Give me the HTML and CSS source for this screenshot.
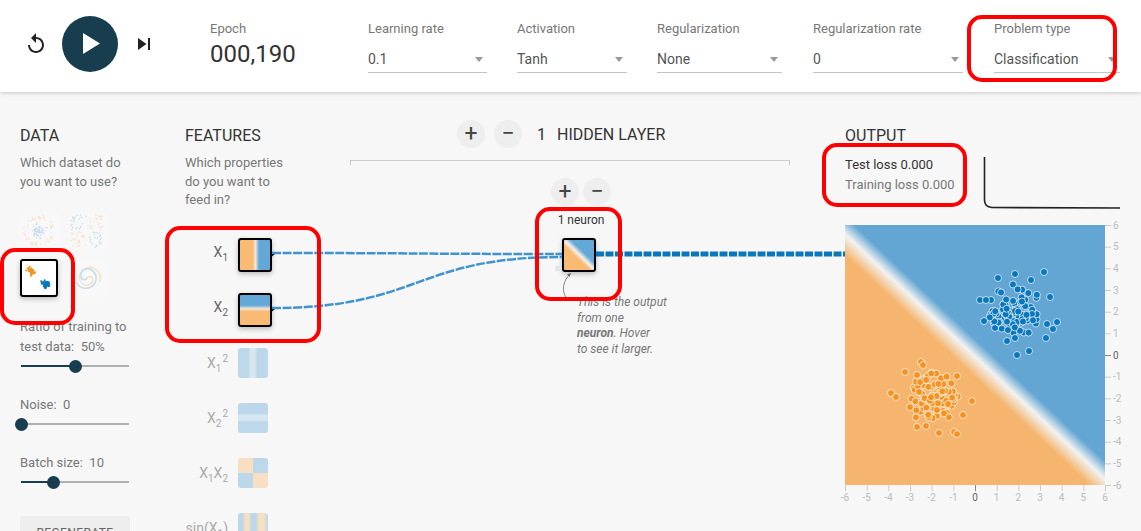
FILE: index.html
```html
<!DOCTYPE html>
<html lang="en">
<head>
  <meta charset="UTF-8">
  <title>Neural Network Playground</title>
  <link rel="stylesheet" href="styles.css">
</head>
<body>
<div class="page">
  <header class="top-bar">
    <div class="player">
      <svg class="icon" viewBox="0 0 24 24"><path d="M12 5V1L7 6l5 5V7c3.31 0 6 2.69 6 6s-2.69 6-6 6-6-2.69-6-6H4c0 4.42 3.58 8 8 8s8-3.58 8-8-3.58-8-8-8z"/></svg>
      <div class="play-btn"><svg viewBox="0 0 56 56"><path d="M21 17v21l17-10.5z"/></svg></div>
      <svg class="icon" viewBox="0 0 24 24"><path d="M6 18l8.5-6L6 6v12zM16 6v12h2V6h-2z"/></svg>
    </div>
    <div class="field epoch">
      <span class="field-label">Epoch</span>
      <span class="epoch-value">000,190</span>
    </div>
    <div class="field w-lr">
      <span class="field-label">Learning rate</span>
      <div class="select">0.1</div>
    </div>
    <div class="field w-act">
      <span class="field-label">Activation</span>
      <div class="select">Tanh</div>
    </div>
    <div class="field w-reg">
      <span class="field-label">Regularization</span>
      <div class="select">None</div>
    </div>
    <div class="field w-rate">
      <span class="field-label">Regularization rate</span>
      <div class="select">0</div>
    </div>
    <div class="field w-prob">
      <span class="field-label">Problem type</span>
      <div class="select">Classification</div>
    </div>
  </header>

  <main class="main">
    <section class="col-data">
      <h4>DATA</h4>
      <p class="hint">Which dataset do<br>you want to use?</p>
      <div class="datasets">
        <svg class="dataset" id="dsCircle" viewBox="0 0 38 38"></svg>
        <svg class="dataset" id="dsXor" viewBox="0 0 38 38"></svg>
        <svg class="dataset active" id="dsGauss" viewBox="0 0 34 34"></svg>
        <svg class="dataset" id="dsSpiral" viewBox="0 0 38 38">
          <path d="M19 19c2-3 6-1 6 2s-4 6-8 5-7-6-5-11 8-8 13-6 9 8 7 14" fill="none" stroke="#f59322" stroke-width="1.6"/>
          <path d="M19 19c-2 3-5 2-6-1s1-7 5-8 9 2 10 7-2 11-8 12-10-2-12-6" fill="none" stroke="#0877bd" stroke-width="1.6"/>
        </svg>
      </div>
      <div class="slider-label first">Ratio of training to<br>test data:  50%</div>
      <div class="slider"><div class="slider-fill" style="width: 50%"></div><div class="slider-thumb" style="left: 50%"></div></div>
      <div class="slider-label">Noise:  0</div>
      <div class="slider"><div class="slider-fill" style="width: 0%"></div><div class="slider-thumb" style="left: 0%"></div></div>
      <div class="slider-label">Batch size:  10</div>
      <div class="slider"><div class="slider-fill" style="width: 30%"></div><div class="slider-thumb" style="left: 30%"></div></div>
      <button class="regen">REGENERATE</button>
    </section>

    <section class="col-features">
      <h4>FEATURES</h4>
      <p class="hint">Which properties<br>do you want to<br>feed in?</p>
      <div class="feature-list">
        <div class="feature on">
          <span class="feature-name">X<sub>1</sub></span>
          <div class="thumb thumb-x1"></div>
        </div>
        <div class="feature on">
          <span class="feature-name">X<sub>2</sub></span>
          <div class="thumb thumb-x2"></div>
        </div>
        <div class="feature">
          <span class="feature-name">X<sub>1</sub><sup>2</sup></span>
          <div class="thumb thumb-x1sq"></div>
        </div>
        <div class="feature">
          <span class="feature-name">X<sub>2</sub><sup>2</sup></span>
          <div class="thumb thumb-x2sq"></div>
        </div>
        <div class="feature">
          <span class="feature-name">X<sub>1</sub>X<sub>2</sub></span>
          <div class="thumb thumb-x1x2"></div>
        </div>
        <div class="feature">
          <span class="feature-name">sin(X<sub>1</sub>)</span>
          <div class="thumb thumb-sin"></div>
        </div>
      </div>
    </section>

    <section class="col-network">
      <div class="layer-head">
        <div class="round-btn">+</div>
        <div class="round-btn">&minus;</div>
        <span class="layer-count">1</span>
        <span class="layer-title">HIDDEN LAYER</span>
      </div>
      <div class="layer-rule"></div>
      <div class="neuron-btns">
        <div class="round-btn">+</div>
        <div class="round-btn">&minus;</div>
      </div>
      <div class="neuron-count">1 neuron</div>
      <div class="thumb thumb-neuron"></div>
      <p class="callout">This is the output<br>from one<br><b>neuron</b>. Hover<br>to see it larger.</p>
    </section>

    <section class="col-output">
      <h4>OUTPUT</h4>
      <div class="loss-row">
        <div class="losses">
          <div class="loss-test">Test loss 0.000</div>
          <div class="loss-train">Training loss 0.000</div>
        </div>
        <svg class="loss-chart" viewBox="0 0 137 54"><path d="M1.5 1V44Q1.5 51 9 51.500L137 52" fill="none" stroke="#222" stroke-width="1.6"/></svg>
      </div>
      <svg class="plot" id="plot" width="260" height="260" viewBox="0 0 260 260">
        <defs>
          <linearGradient id="heat" gradientUnits="userSpaceOnUse" x1="114.700" y1="138" x2="134" y2="117.500">
            <stop offset="0" stop-color="#f5b56e"/>
            <stop offset="0.54" stop-color="#f2f2f2"/>
            <stop offset="1" stop-color="#64a6d3"/>
          </linearGradient>
        </defs>
        <rect width="260" height="260" fill="url(#heat)"/>
      </svg>
    </section>
  </main>

  <svg class="links" viewBox="0 0 1141 531">
    <g fill="none" stroke="#3f94cf" stroke-width="2.500" stroke-dasharray="9 1.500">
      <path d="M272 253C420 253 420 254 562 254"/>
      <path d="M272 308C420 308 415 257 562 257"/>
    </g>
    <path d="M596 254H845" fill="none" stroke="#0877bd" stroke-width="5" stroke-dasharray="8 1.500"/>
    <rect x="555" y="266" width="5" height="5" fill="#dce6ee"/>
    <path d="M567 299C561 291 563 281 570 274" fill="none" stroke="#888" stroke-width="1"/>
    <path d="M571 273l-4 1.500 2.500 2.500z" fill="#666"/>
  </svg>

  <div class="mark mark-problem"></div>
  <div class="mark mark-loss"></div>
  <div class="mark mark-neuron"></div>
  <div class="mark mark-features"></div>
  <div class="mark mark-dataset"></div>
</div>
<script src="script.js"></script>
</body>
</html>
```
FILE: styles.css
```css
* {
  box-sizing: border-box;
}
html, body {
  margin: 0;
  height: 531px;
  overflow: hidden;
}
body {
  font-family: Roboto, "Helvetica Neue", Arial, sans-serif;
  background: #f7f7f7;
  color: #777;
  font-size: 13px;
}
.page {
  position: relative;
  height: 531px;
  overflow: hidden;
}

/* top bar */
.top-bar {
  display: flex;
  height: 92px;
  background: #fff;
  box-shadow: 0 1px 4px rgba(0, 0, 0, 0.2);
}
.player {
  display: flex;
  align-items: center;
  width: 210px;
  padding: 0 0 4px 24px;
}
.icon {
  width: 24px;
  height: 24px;
  fill: #222;
}
.play-btn {
  width: 56px;
  height: 56px;
  margin: 0 14px;
  border-radius: 50%;
  background: #183d4e;
}
.play-btn svg {
  display: block;
  fill: #fff;
}
.field {
  padding-top: 20px;
}
.field-label {
  display: block;
  font-size: 13px;
  line-height: 17px;
  color: #777;
}
.epoch { width: 158px; }
.epoch-value {
  display: block;
  margin-top: 2px;
  font-size: 24px;
  line-height: 30px;
  color: #333;
}
.w-lr { width: 149px; }
.w-lr .select { width: 119px; }
.w-act { width: 140px; }
.w-act .select { width: 110px; }
.w-reg { width: 156px; }
.w-reg .select { width: 125px; }
.w-rate { width: 181px; }
.w-rate .select { width: 150px; }
.w-prob { width: 126px; }
.select {
  position: relative;
  height: 28px;
  margin-top: 8px;
  border-bottom: 1px solid #c4c4c4;
  font-size: 14px;
  line-height: 28px;
  color: #555;
}
.select::after {
  content: "";
  position: absolute;
  right: 4px;
  top: 12px;
  border-left: 4px solid transparent;
  border-right: 4px solid transparent;
  border-top: 5px solid #999;
}

/* columns */
.main {
  display: flex;
  padding: 33px 0 0 20px;
}
h4 {
  margin: 0;
  padding-top: 1px;
  font-size: 16px;
  font-weight: 400;
  line-height: 20px;
  color: #333;
}
.hint {
  margin: 8px 0 0;
  font-size: 13px;
  line-height: 18.500px;
  color: #777;
}
.col-data { width: 165px; }
.col-features { width: 165px; }
.col-network { width: 495px; }
.col-output { width: 296px; }

/* data column */
.datasets {
  display: grid;
  grid-template-columns: 38px 38px;
  gap: 9px 10px;
  margin-top: 21px;
}
.dataset {
  display: block;
  width: 38px;
  height: 38px;
  background: #fff;
  border-radius: 3px;
  opacity: 0.2;
}
.dataset.active {
  opacity: 1;
  border: 2px solid #000;
  box-shadow: 0 2px 5px rgba(0, 0, 0, 0.25);
}
.slider-label {
  margin-top: 28px;
  line-height: 20px;
  white-space: pre;
  color: #777;
}
.slider-label.first {
  margin-top: 20px;
}
.slider {
  position: relative;
  width: 108px;
  height: 2px;
  margin: 8px 0 0 1px;
  background: #b0b0b0;
}
.slider-fill {
  height: 2px;
  background: #183d4e;
}
.slider-thumb {
  position: absolute;
  top: -5.500px;
  width: 13px;
  height: 13px;
  margin-left: -6.500px;
  border-radius: 50%;
  background: #183d4e;
}
.regen {
  display: block;
  width: 110px;
  height: 34px;
  margin-top: 33px;
  border: 0;
  border-radius: 3px;
  background: #eee;
  font-family: inherit;
  font-size: 12px;
  letter-spacing: 0.4px;
  color: #666;
}

/* features column */
.feature-list {
  margin-top: 28.500px;
}
.feature {
  display: flex;
  height: 55px;
}
.feature-name {
  width: 43px;
  height: 30px;
  margin-right: 10px;
  font-size: 14px;
  line-height: 30px;
  text-align: right;
  white-space: nowrap;
  color: #aaa;
}
.feature.on .feature-name {
  height: 34px;
  line-height: 28px;
  color: #666;
}
.feature-name sub, .feature-name sup {
  font-size: 10px;
  line-height: 0;
}
.feature-name sup {
  margin-left: 1px;
}
.thumb {
  width: 30px;
  height: 30px;
  border-radius: 3px;
  opacity: 0.4;
}
.feature.on .thumb, .thumb-neuron {
  width: 34px;
  height: 34px;
  border: 2px solid #000;
  opacity: 1;
  box-shadow: 0 2px 5px rgba(0, 0, 0, 0.25);
}
.feature.on .thumb::after, .thumb-neuron::after {
  content: "";
  position: absolute;
  margin: 10px 0 0 30px;
  border-top: 4px solid transparent;
  border-bottom: 4px solid transparent;
  border-left: 5px solid #000;
}
.thumb-x1 {
  background: linear-gradient(to right, #f9bb73 42%, #f3e8da 52%, #64a8d7 63%);
}
.thumb-x2 {
  background: linear-gradient(to bottom, #64a8d7 34%, #f3e8da 46%, #f9bb73 54%);
}
.thumb-x1sq {
  background: linear-gradient(to right, #64a8d7 34%, #a8cde4 42% 56%, #64a8d7 64%);
}
.thumb-x2sq {
  background: linear-gradient(to bottom, #64a8d7 34%, #a8cde4 42% 56%, #64a8d7 64%);
}
.thumb-x1x2 {
  background: conic-gradient(#64a8d7 25%, #f9bb73 25% 50%, #64a8d7 50% 75%, #f9bb73 75%);
}
.thumb-sin {
  background: linear-gradient(to right, #64a8d7 15%, #f9bb73 25% 35%, #64a8d7 45% 60%, #f9bb73 70% 85%, #64a8d7);
}

/* network column */
.layer-head {
  display: flex;
  align-items: center;
  margin: -5px 0 0 107px;
}
.round-btn {
  width: 28px;
  height: 28px;
  border-radius: 50%;
  background: #eee;
  font-size: 23px;
  line-height: 27px;
  text-align: center;
  color: #444;
}
.layer-head .round-btn + .round-btn {
  margin-left: 9px;
}
.layer-count {
  margin-left: 15px;
  font-size: 16px;
  color: #333;
}
.layer-title {
  margin-left: 11px;
  font-size: 16px;
  color: #333;
}
.layer-rule {
  width: 440px;
  height: 5px;
  margin-top: 12px;
  border: 1px solid #ccc;
  border-bottom: 0;
}
.neuron-btns {
  display: flex;
  gap: 4px;
  margin: 13px 0 0 201px;
}
.neuron-count {
  width: 80px;
  margin: 6px 0 0 191px;
  font-size: 12px;
  line-height: 16px;
  text-align: center;
  color: #333;
}
.thumb-neuron {
  margin: 10px 0 0 212px;
  background: linear-gradient(44deg, #f9bb73 42%, #f6f0ea 51%, #64a8d7 62%);
}
.callout {
  margin: 23px 0 0 227px;
  font-size: 12px;
  font-style: italic;
  line-height: 15.500px;
  color: #777;
}

/* output column */
.loss-row {
  display: flex;
  margin-top: 1px;
  height: 78px;
}
.losses {
  width: 138px;
  padding-top: 8px;
  font-size: 13px;
  line-height: 20px;
}
.loss-test {
  color: #333;
}
.loss-train {
  color: #777;
}
.loss-chart {
  width: 137px;
  height: 54px;
  margin-top: 9px;
}
.plot {
  display: block;
  overflow: visible;
}
.plot text {
  font-size: 10px;
  font-family: Roboto, Arial, sans-serif;
  fill: #bbb;
}

/* overlays */
.links {
  position: absolute;
  left: 0;
  top: 0;
  width: 1141px;
  height: 531px;
  pointer-events: none;
}
.mark {
  position: absolute;
  border: 4px solid #f00;
  border-radius: 15px;
}
.mark-problem { left: 967px; top: 15px; width: 150px; height: 67px; }
.mark-loss { left: 822px; top: 143px; width: 145px; height: 64px; }
.mark-neuron { left: 535px; top: 207px; width: 87px; height: 94px; }
.mark-features { left: 165px; top: 226px; width: 156px; height: 117px; }
.mark-dataset { left: 0; top: 248px; width: 75px; height: 77px; }
```
FILE: script.js
```js
const NS = 'http://www.w3.org/2000/svg';

let seed = 7;
function rand() {
  seed = (seed * 16807) % 2147483647;
  return seed / 2147483647;
}
function gauss() {
  return (rand() + rand() + rand() + rand() - 2) * 1.7;
}

function dot(svg, x, y, r, fill, stroke) {
  const c = document.createElementNS(NS, 'circle');
  c.setAttribute('cx', x);
  c.setAttribute('cy', y);
  c.setAttribute('r', r);
  c.setAttribute('fill', fill);
  if (stroke) {
    c.setAttribute('stroke', stroke);
    c.setAttribute('stroke-opacity', '0.7');
  }
  svg.appendChild(c);
}

// plot: page coordinates minus the plot's corner
const plot = document.getElementById('plot');
const plotX = 845;
const plotY = 225;

function drawCloud(cx, cy, color, outliers) {
  for (let i = 0; i < 110; i++) {
    const x = cx + gauss() * 14;
    const y = cy + gauss() * 14;
    if (Math.hypot(x - cx, y - cy) < 27) {
      dot(plot, x - plotX, y - plotY, 3.5, color, '#fff');
    }
  }
  outliers.forEach(p => dot(plot, p[0] - plotX, p[1] - plotY, 3.5, color, '#fff'));
}

drawCloud(1016, 311, '#0877bd', [
  [998, 278], [1015, 274], [1044, 272], [1031, 280], [1050, 297], [980, 300], [984, 321],
  [1057, 322], [1053, 329], [1047, 324], [1046, 338], [1007, 341], [1015, 338], [1029, 351],
  [1017, 355], [991, 300], [986, 300]
]);
drawCloud(931, 397, '#f59322', [
  [905, 372], [921, 362], [923, 365], [891, 393], [896, 397], [972, 401], [917, 427],
  [926, 426], [939, 433], [954, 432], [957, 434], [963, 415], [917, 375], [957, 376]
]);

// axes
function tick(x1, y1, x2, y2, zero) {
  const l = document.createElementNS(NS, 'line');
  l.setAttribute('x1', x1);
  l.setAttribute('y1', y1);
  l.setAttribute('x2', x2);
  l.setAttribute('y2', y2);
  l.setAttribute('stroke', zero ? '#888' : '#ccc');
  plot.appendChild(l);
}
function label(x, y, text, anchor, zero) {
  const t = document.createElementNS(NS, 'text');
  t.setAttribute('x', x);
  t.setAttribute('y', y);
  t.setAttribute('text-anchor', anchor);
  if (zero) t.style.fill = '#666';
  t.textContent = text;
  plot.appendChild(t);
}
for (let v = -6; v <= 6; v++) {
  const pos = (v + 6) * 260 / 12;
  tick(pos + 0.5, 260, pos + 0.5, 266, v === 0);
  label(pos, 276, String(v), 'middle', v === 0);
  const py = 260 - pos;
  tick(260, py + 0.5, 266, py + 0.5, v === 0);
  label(268, py + 3.500, String(v), 'start', v === 0);
}

// dataset previews
const dsGauss = document.getElementById('dsGauss');
for (let i = 0; i < 45; i++) {
  dot(dsGauss, 9 + gauss() * 2, 10 + gauss() * 2, 1, '#f59322');
  dot(dsGauss, 24 + gauss() * 2, 23 + gauss() * 2, 1, '#0877bd');
}
const dsCircle = document.getElementById('dsCircle');
for (let i = 0; i < 60; i++) {
  const a = rand() * Math.PI * 2;
  const r = 12 + rand() * 4;
  dot(dsCircle, 19 + Math.cos(a) * r, 19 + Math.sin(a) * r, 0.8, '#f59322');
  dot(dsCircle, 19 + gauss() * 3, 19 + gauss() * 3, 0.8, '#0877bd');
}
const dsXor = document.getElementById('dsXor');
for (let i = 0; i < 110; i++) {
  const x = 3 + rand() * 32;
  const y = 3 + rand() * 32;
  if (Math.abs(x - 19) > 1 && Math.abs(y - 19) > 1) {
    dot(dsXor, x, y, 0.8, (x - 19) * (y - 19) > 0 ? '#0877bd' : '#f59322');
  }
}
```
